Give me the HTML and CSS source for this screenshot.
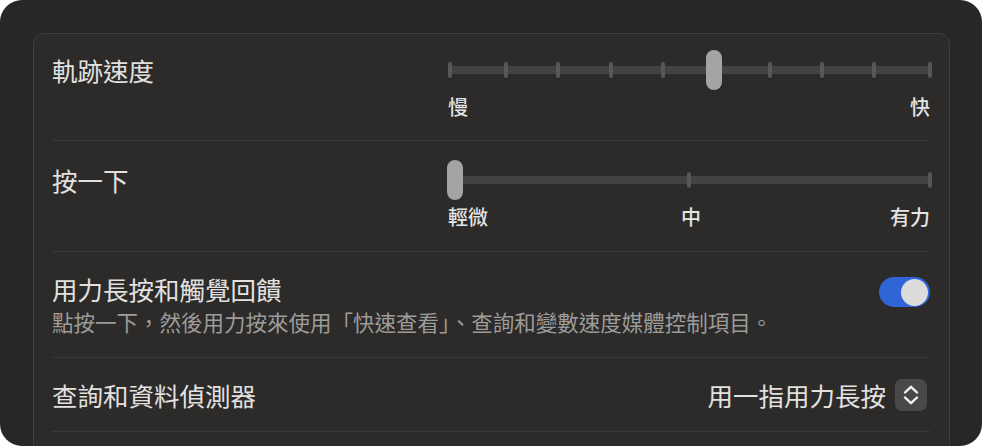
FILE: index.html
```html
<!DOCTYPE html>
<html lang="zh-Hant">
<head>
  <meta charset="UTF-8">
  <meta name="viewport" content="width=device-width, initial-scale=1.0">
  <title>觸控式軌跡板</title>
  <link rel="stylesheet" href="styles.css">
</head>
<body>

<div class="window">
  <div class="card">

    <div class="row">
      <div class="row-title">軌跡速度</div>
      <div class="slider">
        <div class="track">
          <span class="tick" style="left: 0%"></span>
          <span class="tick" style="left: 11.6%"></span>
          <span class="tick" style="left: 22.5%"></span>
          <span class="tick" style="left: 33.3%"></span>
          <span class="tick" style="left: 44.2%"></span>
          <span class="tick" style="left: 55.3%"></span>
          <span class="tick" style="left: 66.3%"></span>
          <span class="tick" style="left: 77.1%"></span>
          <span class="tick" style="left: 87.9%"></span>
          <span class="tick" style="left: 99.6%"></span>
          <span class="thumb" style="left: 53.6%"></span>
        </div>
        <div class="slider-labels">
          <span>慢</span>
          <span>快</span>
        </div>
      </div>
    </div>

    <div class="row row-second">
      <div class="row-title">按一下</div>
      <div class="slider">
        <div class="track">
          <span class="tick" style="left: 0%"></span>
          <span class="tick" style="left: 49.5%"></span>
          <span class="tick" style="left: 99.6%"></span>
          <span class="thumb" style="left: -0.2%"></span>
        </div>
        <div class="slider-labels">
          <span>輕微</span>
          <span class="mid">中</span>
          <span>有力</span>
        </div>
      </div>
    </div>

    <div class="row row-toggle">
      <div>
        <div class="row-title">用力長按和觸覺回饋</div>
        <div class="row-desc">點按一下，然後用力按來使用「快速查看」、查詢和變數速度媒體控制項目。</div>
      </div>
      <div class="switch"><span class="knob"></span></div>
    </div>

    <div class="row row-select">
      <div class="row-title">查詢和資料偵測器</div>
      <div class="select">
        <span>用一指用力長按</span>
        <span class="stepper">
          <svg width="18" height="22" viewBox="0 0 18 22">
            <path d="M3 8.5 L9 2.8 L15 8.5" fill="none" stroke="#f2f2f2" stroke-width="2.4" stroke-linecap="round" stroke-linejoin="round"/>
            <path d="M3 13.5 L9 19.2 L15 13.5" fill="none" stroke="#f2f2f2" stroke-width="2.4" stroke-linecap="round" stroke-linejoin="round"/>
          </svg>
        </span>
      </div>
    </div>

  </div>
</div>

</body>
</html>
```

FILE: styles.css
```css
body {
  margin: 0;
  padding: 0;
  background-color: #ffffff;
  font-family: "Noto Sans CJK TC", "Noto Sans", sans-serif;
}
.window {
  width: 982px;
  height: 446px;
  box-sizing: border-box;
  padding: 33px 32px 0 33px;
  background-color: #292726;
  border-radius: 22px;
  overflow: hidden;
}
.card {
  height: 500px;
  padding: 0 19px 0 18px;
  background-color: #2c2b2a;
  border: 1px solid #403e3d;
  border-radius: 11px;
}
.row {
  display: grid;
  grid-template-columns: 1fr 482px;
  padding: 16px 0 21px;
  border-bottom: 1px solid #3a3938;
}
.row-second {
  padding: 19px 0 22px;
}
.row-title {
  font-size: 25.5px;
  line-height: 40px;
  color: #e2e1e0;
}
.slider {
  display: flex;
  flex-direction: column;
}
.track {
  position: relative;
  height: 40px;
}
.track::before {
  content: "";
  position: absolute;
  left: 0;
  right: 0;
  top: 16px;
  height: 8px;
  border-radius: 4px;
  background-color: #444342;
}
.tick {
  position: absolute;
  top: 12px;
  width: 4px;
  height: 16px;
  border-radius: 2px;
  background-color: #585756;
}
.thumb {
  position: absolute;
  top: 0;
  width: 16px;
  height: 40px;
  border-radius: 8px;
  background-color: #a4a4a4;
}
.slider-labels {
  display: flex;
  justify-content: space-between;
  margin-top: 5px;
  font-size: 20px;
  line-height: 24px;
  font-weight: 500;
  color: #e4e4e4;
}
.slider-labels .mid {
  margin-left: 4px;
}
.row-toggle {
  grid-template-columns: 1fr auto;
  padding: 19px 0 20px;
}
.row-toggle .row-title {
  line-height: 36px;
}
.row-desc {
  font-size: 21.5px;
  line-height: 30px;
  color: #9d9c9b;
}
.switch {
  position: relative;
  width: 51px;
  height: 30px;
  margin-top: 6px;
  border-radius: 15px;
  background-color: #2f65d6;
}
.knob {
  position: absolute;
  right: 2px;
  top: 1.5px;
  width: 27px;
  height: 27px;
  border-radius: 50%;
  background-color: #dcdcdc;
}
.row-select {
  grid-template-columns: 1fr auto;
  align-items: center;
  padding: 20px 0 19px;
}
.row-select .row-title {
  line-height: 34px;
}
.select {
  display: flex;
  align-items: center;
  gap: 9px;
  font-size: 25.5px;
  line-height: 34px;
  color: #e2e1e0;
  margin-right: 3px;
}
.stepper {
  display: flex;
  align-items: center;
  justify-content: center;
  width: 32px;
  height: 32px;
  border-radius: 7px;
  background-color: #4a4948;
}
```
